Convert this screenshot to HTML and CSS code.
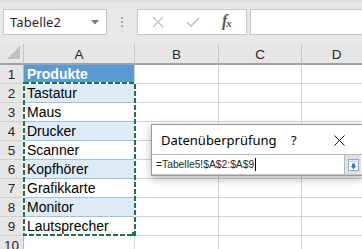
FILE: index.html
```html
<!DOCTYPE html>
<html lang="de">
<head>
<meta charset="utf-8">
<title>Datenüberprüfung</title>
<link rel="stylesheet" href="styles.css">
</head>
<body>
<div class="app">
  <div class="toolbar">
    <div class="namebox">
      <span class="namebox-text">Tabelle2</span>
      <svg class="namebox-arrow" width="8" height="5" viewBox="0 0 8 5"><path d="M0 0H8L4 4.5Z" fill="#7a7a7a"/></svg>
    </div>
    <div class="grip"><i></i><i></i><i></i></div>
    <div class="fbuttons">
      <svg class="fbtn" width="12" height="12" viewBox="0 0 12 12"><path d="M1 1L11 11M11 1L1 11" stroke="#c2c2c2" stroke-width="1.4"/></svg>
      <svg class="fbtn" width="14" height="12" viewBox="0 0 14 12"><path d="M1 6L5 10L13 2" stroke="#c2c2c2" stroke-width="1.6" fill="none"/></svg>
      <span class="fx">f<span class="fx-x">x</span></span>
    </div>
    <div class="finput"></div>
  </div>

  <div class="sheet">
    <div class="corner"><svg width="14" height="13" viewBox="0 0 14 13"><path d="M13 0V13H0Z" fill="#c0c0c0"/></svg></div>
    <div class="colhead">A</div>
    <div class="colhead">B</div>
    <div class="colhead">C</div>
    <div class="colhead">D</div>

    <div class="rowhead">1</div><div class="cell a head">Produkte</div><div class="cell"></div><div class="cell"></div><div class="cell"></div>
    <div class="rowhead">2</div><div class="cell a band">Tastatur</div><div class="cell"></div><div class="cell"></div><div class="cell"></div>
    <div class="rowhead">3</div><div class="cell a">Maus</div><div class="cell"></div><div class="cell"></div><div class="cell"></div>
    <div class="rowhead">4</div><div class="cell a band">Drucker</div><div class="cell"></div><div class="cell"></div><div class="cell"></div>
    <div class="rowhead">5</div><div class="cell a">Scanner</div><div class="cell"></div><div class="cell"></div><div class="cell"></div>
    <div class="rowhead">6</div><div class="cell a band">Kopfhörer</div><div class="cell"></div><div class="cell"></div><div class="cell"></div>
    <div class="rowhead">7</div><div class="cell a">Grafikkarte</div><div class="cell"></div><div class="cell"></div><div class="cell"></div>
    <div class="rowhead">8</div><div class="cell a band">Monitor</div><div class="cell"></div><div class="cell"></div><div class="cell"></div>
    <div class="rowhead">9</div><div class="cell a">Lautsprecher</div><div class="cell"></div><div class="cell"></div><div class="cell"></div>
    <div class="rowhead">10</div><div class="cell"></div><div class="cell"></div><div class="cell"></div><div class="cell"></div>

    <svg class="ants" width="114" height="155" viewBox="0 0 114 155">
      <rect x="1" y="1" width="111" height="152" fill="none" stroke="#ffffff" stroke-width="2"/>
      <rect x="1" y="1" width="111" height="152" fill="none" stroke="#217346" stroke-width="2" stroke-dasharray="5 2"/>
      <rect x="109" y="150" width="4" height="4" fill="#217346"/>
    </svg>
  </div>

  <div class="dialog">
    <div class="dlg-title">
      <span class="dlg-name">Datenüberprüfung</span>
      <span class="dlg-help">?</span>
      <svg class="dlg-close" width="11" height="11" viewBox="0 0 11 11"><path d="M0.5 0.5L10.5 10.5M10.5 0.5L0.5 10.5" stroke="#1a1a1a" stroke-width="1"/></svg>
    </div>
    <div class="dlg-inputrow">
      <div class="dlg-input">=Tabelle5!$A$2:$A$9<span class="caret"></span></div>
      <div class="dlg-btn">
        <svg width="11" height="12" viewBox="0 0 11 12">
          <rect x="0.5" y="0.5" width="10" height="11" fill="#ffffff" stroke="#8ca7c8"/>
          <rect x="1.5" y="1.5" width="8" height="2" fill="#c9d6e6"/>
          <path d="M4 4.5H7V7H8.5L5.5 10L2.5 7H4Z" fill="#2f7fd1"/>
        </svg>
      </div>
    </div>
  </div>
</div>
</body>
</html>
```

FILE: styles.css
```css
* { box-sizing: border-box; }
html, body { margin: 0; padding: 0; }
body {
  width: 362px;
  height: 249px;
  overflow: hidden;
  background: #e6e6e6;
  font-family: "Noto Sans", "Open Sans", sans-serif;
}
.app { position: relative; width: 362px; height: 249px; }

.toolbar {
  height: 44px;
  display: flex;
  align-items: flex-start;
  padding: 9px 0 0 3px;
  background: linear-gradient(#dcdcdc 0, #e8e8e8 4px, #e8e8e8 100%);
}
.namebox {
  width: 104px;
  height: 26px;
  background: #fff;
  border: 1px solid #c6c6c6;
  display: flex;
  align-items: center;
  justify-content: space-between;
  padding: 0 7px 0 6px;
}
.namebox-text { font-size: 13px; color: #262626; letter-spacing: 0.1px; }
.grip {
  width: 30px;
  height: 26px;
  display: flex;
  flex-direction: column;
  align-items: center;
  justify-content: center;
  gap: 2px;
}
.grip i { display: block; width: 2px; height: 2px; background: #a6a6a6; }
.fbuttons {
  width: 110px;
  height: 26px;
  background: #fff;
  border: 1px solid #c6c6c6;
  display: flex;
  align-items: center;
  padding-left: 14px;
  gap: 22px;
}
.fx {
  font-family: "Liberation Serif", serif;
  font-style: italic;
  font-weight: bold;
  font-size: 16px;
  color: #595959;
  margin-left: 0;
  display: flex;
  align-items: baseline;
  margin-top: -2px;
}
.fx-x { font-size: 11px; margin-left: -1px; position: relative; top: 1px; }
.finput {
  flex: 1;
  height: 26px;
  margin-left: 3px;
  margin-right: -4px;
  background: #fff;
  border: 1px solid #c6c6c6;
}

.sheet {
  display: grid;
  grid-template-columns: 24px 111px 84px 83px 70px;
  grid-template-rows: 21px repeat(10, 19px);
  font-family: "Liberation Sans", Arial, sans-serif;
}
.corner {
  background: #e6e6e6;
  border-right: 1px solid #c6c6c6;
  border-bottom: 2px solid #a0a0a0;
  display: flex;
  align-items: flex-end;
  justify-content: flex-end;
  padding: 0 2px 4px 0;
}
.colhead {
  background: #e6e6e6;
  border-right: 1px solid #c6c6c6;
  border-bottom: 2px solid #a0a0a0;
  font-size: 13.5px;
  color: #262626;
  display: flex;
  align-items: center;
  justify-content: center;
  padding-top: 1px;
}
.rowhead {
  background: #e6e6e6;
  border-right: 1px solid #b9b9b9;
  border-bottom: 1px solid #d0d0d0;
  font-size: 13.5px;
  color: #262626;
  display: flex;
  align-items: center;
  justify-content: center;
}
.cell {
  background: #fff;
  border-right: 1px solid #d4d4d4;
  border-bottom: 1px solid #d4d4d4;
  font-size: 14px;
  color: #000;
  display: flex;
  align-items: center;
  padding-left: 3px;
  white-space: nowrap;
}
.cell.a { border-bottom-color: #9bc2e6; }
.cell.head { background: #5b9bd5; color: #fff; font-weight: bold; }
.cell.band { background: #ddebf7; }

.ants {
  position: absolute;
  left: 23px;
  top: 82px;
}

.dialog {
  position: absolute;
  left: 151px;
  top: 124px;
  width: 213px;
  height: 52px;
  background: #fff;
  border: 1px solid #9a9a9a;
  box-shadow: 0 3px 9px rgba(0, 0, 0, 0.28);
  display: flex;
  flex-direction: column;
}
.dlg-title {
  height: 30px;
  display: flex;
  align-items: center;
  padding-left: 9px;
  font-size: 13px;
  color: #000;
}
.dlg-name { width: 130px; }
.dlg-help { width: 43px; }
.dlg-close { margin-top: 1px; }
.dlg-inputrow {
  height: 21px;
  display: flex;
  border-top: 1px solid #b8b8b8;
  border-bottom: 1px solid #c8c8c8;
}
.dlg-input {
  flex: 1;
  display: flex;
  align-items: center;
  padding-left: 4px;
  font-family: "Liberation Sans", Arial, sans-serif;
  font-size: 10.3px;
  color: #262626;
}
.caret { display: inline-block; width: 1px; height: 13px; background: #000; margin-left: 1px; }
.dlg-btn {
  width: 17px;
  margin-right: 2px;
  background: #e1e1e1;
  border-left: 1px solid #b8b8b8;
  display: flex;
  align-items: center;
  justify-content: center;
}
```
